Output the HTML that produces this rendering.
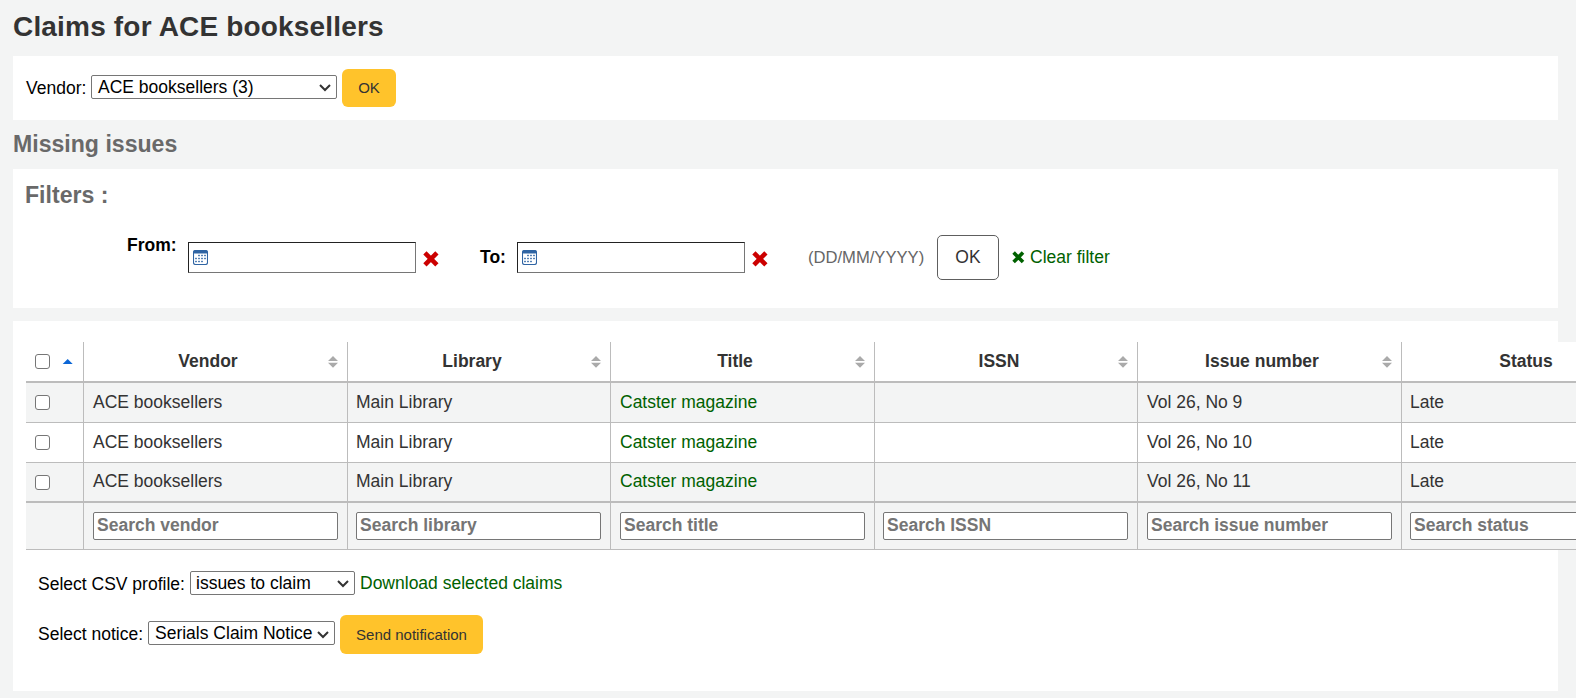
<!DOCTYPE html>
<html><head><meta charset="utf-8">
<style>
*{box-sizing:border-box;}
html,body{margin:0;padding:0;}
body{width:1576px;height:698px;overflow:hidden;background:#f3f4f4;font-family:"Liberation Sans",sans-serif;font-size:17.5px;color:#000;position:relative;}
.abs{position:absolute;}
h1{position:absolute;margin:0;left:13px;top:11px;font-size:28px;letter-spacing:0.18px;font-weight:bold;color:#333;line-height:32px;white-space:nowrap;}
.panel{position:absolute;left:13px;width:1545px;background:#fff;}
.sel{position:absolute;border:1px solid #767676;border-radius:2px;background:#fff;font-size:17.5px;color:#000;white-space:nowrap;overflow:hidden;}
.sel span{position:absolute;left:6px;top:0;}
.sel svg{position:absolute;}
.btny{position:absolute;background:#ffc32b;border-radius:6px;color:#333;text-align:center;}
.lbl{position:absolute;white-space:nowrap;line-height:20px;}
h2{position:absolute;margin:0;left:13px;font-size:23.1px;font-weight:bold;color:#696969;white-space:nowrap;}
.inp{position:absolute;border:1px solid #767676;border-top-color:#222;border-left-color:#222;background:#fff;}
.link,.td.link{color:#006100;}
.th{position:absolute;top:351px;width:200px;text-align:center;font-weight:bold;color:#333;line-height:20px;white-space:nowrap;}
.sorti{position:absolute;}
.cb{position:absolute;width:15px;height:15px;border:1.5px solid #767676;border-radius:3px;background:#fff;}
.td{position:absolute;line-height:20px;color:#333;white-space:nowrap;}
.sinp{position:absolute;top:512px;width:245px;height:28px;border:1px solid #767676;border-radius:2px;background:#fff;overflow:hidden;}
.sinp span{position:absolute;left:3px;top:2px;line-height:20px;font-weight:bold;color:#757575;white-space:nowrap;}
</style></head><body>
<h1>Claims for ACE booksellers</h1>

<div class="panel" style="top:56px;height:64px;"></div>
<div class="lbl" style="left:26px;top:78px;">Vendor:</div>
<div class="sel" style="left:91px;top:75px;width:246px;height:24px;"><span style="top:1px;line-height:20px;">ACE booksellers (3)</span>
<svg style="left:227px;top:8px" width="12" height="8" viewBox="0 0 12 8"><path d="M1 1 L6 6 L11 1" stroke="#333" stroke-width="2" fill="none"/></svg></div>
<div class="btny" style="left:342px;top:69px;width:54px;height:38px;line-height:38px;font-size:15px;">OK</div>

<h2 style="top:130px;line-height:28px;">Missing issues</h2>

<div class="panel" style="top:169px;height:139px;"></div>
<h2 style="left:25px;top:181px;line-height:28px;">Filters :</h2>
<div class="lbl" style="left:127px;top:235px;font-weight:bold;">From:</div>
<div class="inp" style="left:188px;top:242px;width:228px;height:31px;"></div>
<svg class="abs" style="left:193px;top:250px" width="15" height="15" viewBox="0 0 15 15"><rect x="0.5" y="0.5" width="14" height="14" rx="2" fill="none" stroke="#2f64a3" stroke-width="1.1"/><rect x="0.5" y="0.5" width="14" height="3" rx="1" fill="#2f64a3"/><g fill="#2f64a3"><rect x="5.2" y="4.8" width="1.6" height="1.4"/><rect x="8.2" y="4.8" width="1.6" height="1.4"/><rect x="11.2" y="4.8" width="1.6" height="1.4"/><rect x="2.2" y="7.8" width="1.6" height="1.4"/><rect x="5.2" y="7.8" width="1.6" height="1.4"/><rect x="8.2" y="7.8" width="1.6" height="1.4"/><rect x="11.2" y="7.8" width="1.6" height="1.4"/><rect x="2.2" y="10.8" width="1.6" height="1.4"/><rect x="5.2" y="10.8" width="1.6" height="1.4"/><rect x="8.2" y="10.8" width="1.6" height="1.4"/></g></svg>
<svg class="abs" style="left:423px;top:251px" width="16" height="16" viewBox="0 0 16 16"><path d="M1.9 1.9 L13.9 13.9 M13.9 1.9 L1.9 13.9" stroke="#cc0000" stroke-width="4.6" stroke-linecap="butt"/></svg>
<div class="lbl" style="left:480px;top:247px;font-weight:bold;">To:</div>
<div class="inp" style="left:517px;top:242px;width:228px;height:31px;"></div>
<svg class="abs" style="left:522px;top:250px" width="15" height="15" viewBox="0 0 15 15"><rect x="0.5" y="0.5" width="14" height="14" rx="2" fill="none" stroke="#2f64a3" stroke-width="1.1"/><rect x="0.5" y="0.5" width="14" height="3" rx="1" fill="#2f64a3"/><g fill="#2f64a3"><rect x="5.2" y="4.8" width="1.6" height="1.4"/><rect x="8.2" y="4.8" width="1.6" height="1.4"/><rect x="11.2" y="4.8" width="1.6" height="1.4"/><rect x="2.2" y="7.8" width="1.6" height="1.4"/><rect x="5.2" y="7.8" width="1.6" height="1.4"/><rect x="8.2" y="7.8" width="1.6" height="1.4"/><rect x="11.2" y="7.8" width="1.6" height="1.4"/><rect x="2.2" y="10.8" width="1.6" height="1.4"/><rect x="5.2" y="10.8" width="1.6" height="1.4"/><rect x="8.2" y="10.8" width="1.6" height="1.4"/></g></svg>
<svg class="abs" style="left:752px;top:251px" width="16" height="16" viewBox="0 0 16 16"><path d="M1.9 1.9 L13.9 13.9 M13.9 1.9 L1.9 13.9" stroke="#cc0000" stroke-width="4.6" stroke-linecap="butt"/></svg>
<div class="lbl" style="left:808px;top:248px;color:#666;font-size:16.6px;">(DD/MM/YYYY)</div>
<div class="abs" style="left:937px;top:235px;width:62px;height:45px;border:1px solid #5e5e5e;border-radius:5px;background:#fff;text-align:center;line-height:43px;color:#333;">OK</div>
<svg class="abs" style="left:1012px;top:251px" width="13" height="13" viewBox="0 0 13 13"><path d="M1.6 1.6 L11 11 M11 1.6 L1.6 11" stroke="#006100" stroke-width="3.6" stroke-linecap="butt"/></svg>
<div class="lbl link" style="left:1030px;top:247px;">Clear filter</div>

<div class="panel" style="top:321px;height:370px;"></div>
<div class="abs" style="left:26px;top:342px;width:1550px;height:39px;background:#fff;"></div>
<div class="abs" style="left:26px;top:381px;width:1550px;height:2px;background:#bcbcbc;"></div>
<div class="abs" style="left:26px;top:383px;width:1550px;height:39px;background:#f3f4f4;"></div>
<div class="abs" style="left:26px;top:422px;width:1550px;height:1px;background:#bcbcbc;"></div>
<div class="abs" style="left:26px;top:423px;width:1550px;height:39px;background:#fff;"></div>
<div class="abs" style="left:26px;top:462px;width:1550px;height:1px;background:#bcbcbc;"></div>
<div class="abs" style="left:26px;top:463px;width:1550px;height:38px;background:#f3f4f4;"></div>
<div class="abs" style="left:26px;top:501px;width:1550px;height:2px;background:#bcbcbc;"></div>
<div class="abs" style="left:26px;top:503px;width:1550px;height:46px;background:#f3f4f4;"></div>
<div class="abs" style="left:26px;top:549px;width:1550px;height:1px;background:#bcbcbc;"></div>
<div class="abs" style="left:83px;top:342px;width:1px;height:207px;background:#bcbcbc;"></div>
<div class="abs" style="left:347px;top:342px;width:1px;height:207px;background:#bcbcbc;"></div>
<div class="abs" style="left:610px;top:342px;width:1px;height:207px;background:#bcbcbc;"></div>
<div class="abs" style="left:874px;top:342px;width:1px;height:207px;background:#bcbcbc;"></div>
<div class="abs" style="left:1137px;top:342px;width:1px;height:207px;background:#bcbcbc;"></div>
<div class="abs" style="left:1401px;top:342px;width:1px;height:207px;background:#bcbcbc;"></div>
<div class="th" style="left:108px;">Vendor</div>
<svg class="sorti" style="left:328px;top:356px" width="10" height="12" viewBox="0 0 10 12"><path d="M5 0.1 L10 5.1 L0 5.1 Z M0 6.8 L10 6.8 L5 11.8 Z" fill="#aaa"/></svg>
<div class="th" style="left:372px;">Library</div>
<svg class="sorti" style="left:591px;top:356px" width="10" height="12" viewBox="0 0 10 12"><path d="M5 0.1 L10 5.1 L0 5.1 Z M0 6.8 L10 6.8 L5 11.8 Z" fill="#aaa"/></svg>
<div class="th" style="left:635px;">Title</div>
<svg class="sorti" style="left:855px;top:356px" width="10" height="12" viewBox="0 0 10 12"><path d="M5 0.1 L10 5.1 L0 5.1 Z M0 6.8 L10 6.8 L5 11.8 Z" fill="#aaa"/></svg>
<div class="th" style="left:899px;">ISSN</div>
<svg class="sorti" style="left:1118px;top:356px" width="10" height="12" viewBox="0 0 10 12"><path d="M5 0.1 L10 5.1 L0 5.1 Z M0 6.8 L10 6.8 L5 11.8 Z" fill="#aaa"/></svg>
<div class="th" style="left:1162px;">Issue number</div>
<svg class="sorti" style="left:1382px;top:356px" width="10" height="12" viewBox="0 0 10 12"><path d="M5 0.1 L10 5.1 L0 5.1 Z M0 6.8 L10 6.8 L5 11.8 Z" fill="#aaa"/></svg>
<div class="th" style="left:1426px;">Status</div>
<svg class="abs" style="left:62px;top:358px" width="11" height="7" viewBox="0 0 11 7"><path d="M5.7 0.9 L10.7 6.1 L0.7 6.1 Z" fill="#0b66d6"/></svg>
<div class="cb" style="left:35px;top:354px;"></div>
<div class="cb" style="left:35px;top:395px;"></div>
<div class="td" style="left:93px;top:392px;">ACE booksellers</div>
<div class="td" style="left:356px;top:392px;">Main Library</div>
<div class="td link" style="left:620px;top:392px;">Catster magazine</div>
<div class="td" style="left:1147px;top:392px;">Vol 26, No 9</div>
<div class="td" style="left:1410px;top:392px;">Late</div>
<div class="cb" style="left:35px;top:435px;"></div>
<div class="td" style="left:93px;top:432px;">ACE booksellers</div>
<div class="td" style="left:356px;top:432px;">Main Library</div>
<div class="td link" style="left:620px;top:432px;">Catster magazine</div>
<div class="td" style="left:1147px;top:432px;">Vol 26, No 10</div>
<div class="td" style="left:1410px;top:432px;">Late</div>
<div class="cb" style="left:35px;top:475px;"></div>
<div class="td" style="left:93px;top:471px;">ACE booksellers</div>
<div class="td" style="left:356px;top:471px;">Main Library</div>
<div class="td link" style="left:620px;top:471px;">Catster magazine</div>
<div class="td" style="left:1147px;top:471px;">Vol 26, No 11</div>
<div class="td" style="left:1410px;top:471px;">Late</div>
<div class="sinp" style="left:93px;"><span>Search vendor</span></div>
<div class="sinp" style="left:356px;"><span>Search library</span></div>
<div class="sinp" style="left:620px;"><span>Search title</span></div>
<div class="sinp" style="left:883px;"><span>Search ISSN</span></div>
<div class="sinp" style="left:1147px;"><span>Search issue number</span></div>
<div class="sinp" style="left:1410px;"><span>Search status</span></div>
<div class="lbl" style="left:38px;top:574px;">Select CSV profile:</div>
<div class="sel" style="left:190px;top:571px;width:165px;height:24px;"><span style="left:5px;top:1px;line-height:20px;">issues to claim</span>
<svg style="left:146px;top:8px" width="12" height="8" viewBox="0 0 12 8"><path d="M1 1 L6 6 L11 1" stroke="#333" stroke-width="2" fill="none"/></svg></div>
<div class="lbl link" style="left:360px;top:573px;">Download selected claims</div>
<div class="lbl" style="left:38px;top:624px;">Select notice:</div>
<div class="sel" style="left:148px;top:621px;width:187px;height:24px;"><span style="left:6px;top:1px;line-height:20px;">Serials Claim Notice</span>
<svg style="left:168px;top:9px" width="12" height="8" viewBox="0 0 12 8"><path d="M1 1 L6 6 L11 1" stroke="#333" stroke-width="2" fill="none"/></svg></div>
<div class="btny" style="left:340px;top:615px;width:143px;height:39px;line-height:39px;font-size:15px;">Send notification</div>
</body></html>
